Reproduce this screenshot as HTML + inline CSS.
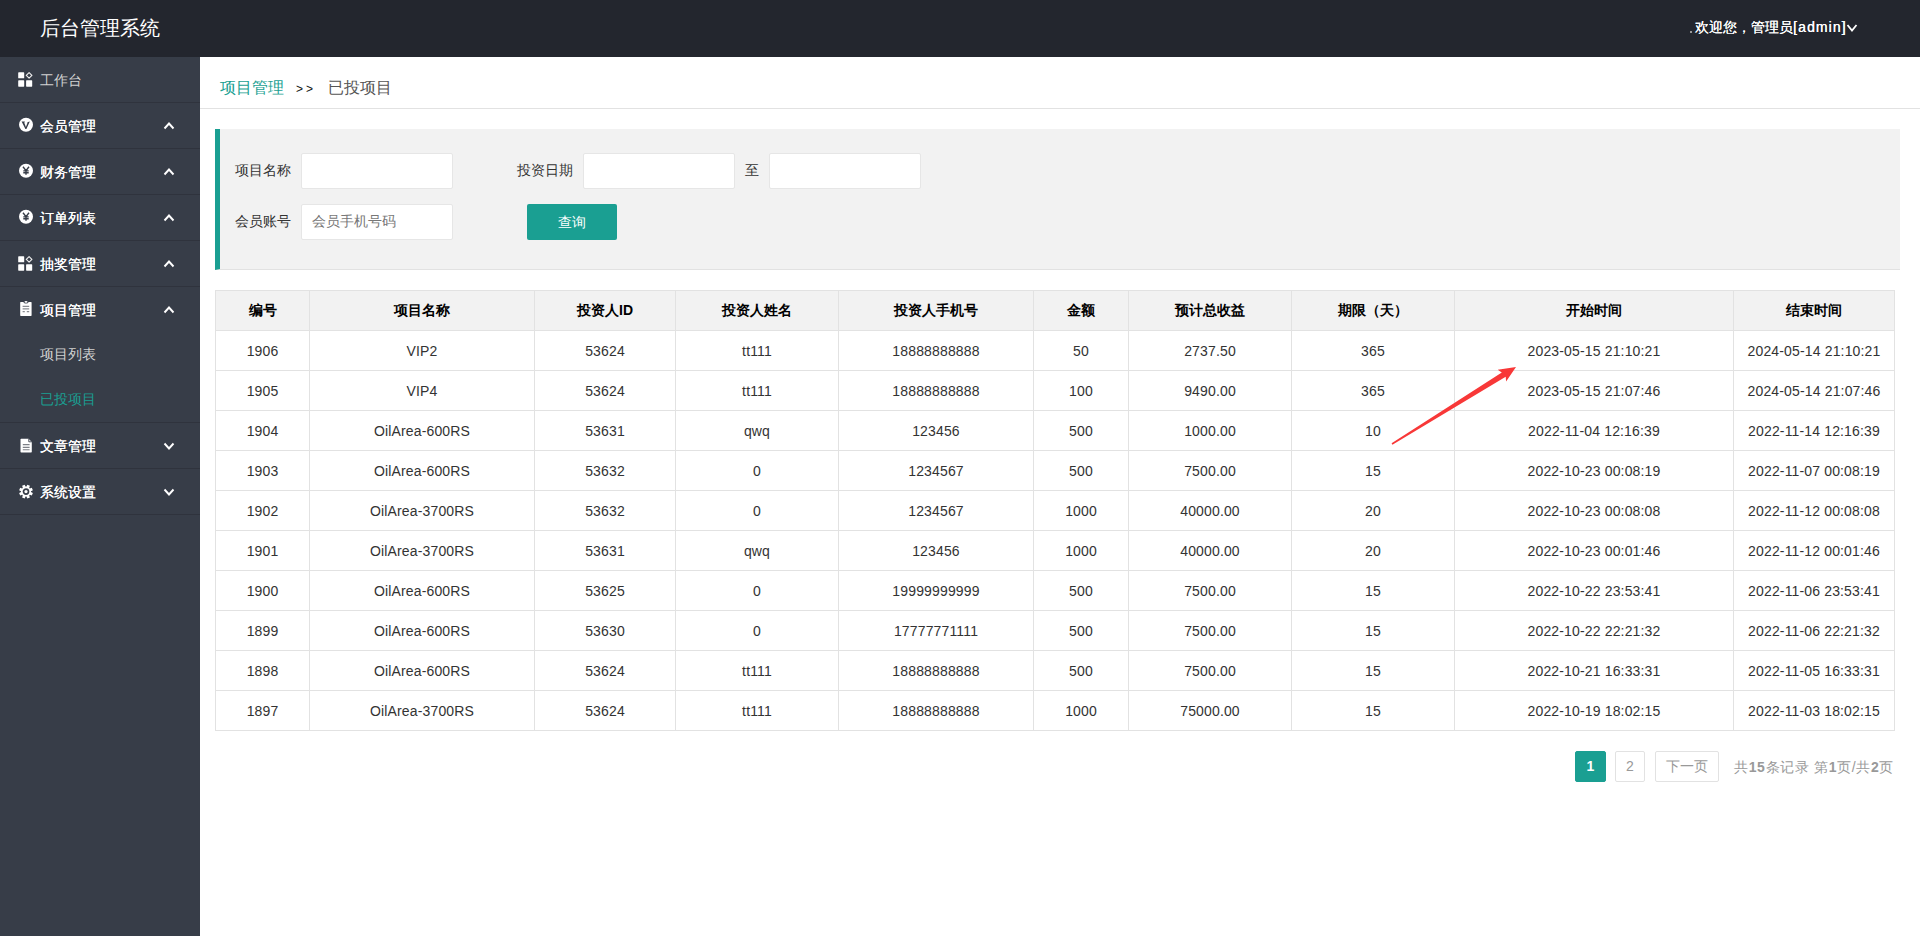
<!DOCTYPE html>
<html><head><meta charset="utf-8">
<style>
*{box-sizing:border-box;margin:0;padding:0}
html,body{width:1920px;height:936px;overflow:hidden;background:#fff;font-family:"Liberation Sans",sans-serif;font-size:14px;color:#333}
.a{position:absolute}
.hdr{position:absolute;left:0;top:0;width:1920px;height:57px;background:#23262E}
.hdr .logo{position:absolute;left:40px;top:14px;font-size:20px;color:#fff;line-height:28px;white-space:nowrap}
.hdr .user{position:absolute;left:1695px;top:17px;color:#fff;font-size:14px;line-height:20px;white-space:nowrap;text-shadow:0.3px 0 0 #fff}
.side{position:absolute;left:0;top:57px;width:200px;height:879px;background:#373D48}
.nav{position:absolute;left:0;width:200px;height:46px;border-bottom:1px solid #2f333d}
.nav .t{position:absolute;left:40px;top:13px;line-height:20px;color:#fff;text-shadow:0.45px 0 0 #fff;white-space:nowrap}
.nav .t.n{text-shadow:none;color:#d2d2d2}
.nav svg{position:absolute}
.sub{position:absolute;left:40px;line-height:20px;color:#d2d2d2;white-space:nowrap}
.crumb{position:absolute;left:200px;top:57px;width:1720px;height:52px;border-bottom:1px solid #e2e2e2}
.quote{position:absolute;left:215px;top:129px;width:1685px;height:141px;background:#f2f2f2;border-left:5px solid #1a9f92;border-bottom:1px solid #e2e2e2}
.lbl{position:absolute;line-height:20px;color:#333;white-space:nowrap}
.inp{position:absolute;width:152px;height:36px;background:#fff;border:1px solid #e6e6e6;border-radius:2px}
.btn{position:absolute;left:527px;top:204px;width:90px;height:36px;background:#1a9f92;color:#fff;border-radius:2px;text-align:center;line-height:36px}
table{position:absolute;left:215px;top:290px;border-collapse:collapse;table-layout:fixed;width:1680px}
td,th{border:1px solid #e2e2e2;height:40px;text-align:center;padding:0;font-size:14px;color:#333;white-space:nowrap}
td{letter-spacing:0.15px}
th{background:#f2f2f2;font-weight:bold;color:#000}
.pg{position:absolute;top:751px;height:31px;border:1px solid #e2e2e2;border-radius:2px;background:#fff;color:#999;text-align:center;line-height:29px}
</style></head><body>
<div class="hdr">
  <div class="logo">后台管理系统</div>
  <div class="a" style="left:1690px;top:31px;width:1.5px;height:1.5px;background:#999"></div>
  <div class="user">欢迎您，管理员<span style="letter-spacing:1.1px">[admin]</span></div>
  <svg class="a" style="left:1846px;top:23px" width="12" height="10" viewBox="0 0 12 10"><path d="M1.5 2 L6 7.5 L10.5 2" fill="none" stroke="#fff" stroke-width="1.8"/></svg>
</div>
<div class="side">
  <div class="nav" style="top:0">
    <svg style="left:18px;top:15px" width="16" height="16" viewBox="0 0 16 16"><rect x="0.2" y="0.3" width="6" height="6" rx="0.6" fill="#fff"/><path d="M11.1 0.7 L13.9 3.4 L11.1 6.1 L8.3 3.4 Z" fill="none" stroke="#eee" stroke-width="1.15" stroke-linejoin="round"/><rect x="0.2" y="8.3" width="6" height="6.4" rx="0.6" fill="#fff"/><rect x="8.1" y="8.3" width="6.1" height="6.4" rx="0.6" fill="#fff"/></svg>
    <div class="t n">工作台</div></div>
  <div class="nav" style="top:46px">
    <svg style="left:18px;top:14px" width="16" height="16" viewBox="0 0 16 16"><circle cx="8" cy="7.8" r="7" fill="#fff"/><path d="M3.6 4.6 L6.8 4.6 L6.8 5.3 L6.2 5.5 L7.9 10 L9.6 5.5 L9.2 5.2 L11.8 4.6 L8.4 12 L7.4 12 Z" fill="#373D48"/></svg>
    <div class="t">会员管理</div>
    <svg style="left:162px;top:18px" width="14" height="10" viewBox="0 0 14 10"><path d="M2.5 7.5 L7 2.5 L11.5 7.5" fill="none" stroke="#fff" stroke-width="1.9"/></svg></div>
  <div class="nav" style="top:92px">
    <svg style="left:18px;top:14px" width="16" height="16" viewBox="0 0 16 16"><circle cx="8" cy="7.8" r="7" fill="#fff"/><path d="M5 3.8 L8 7.6 L11 3.8 M8 7.4 L8 11.8 M5.3 7.9 L10.7 7.9 M5.3 9.8 L10.7 9.8" fill="none" stroke="#373D48" stroke-width="1.4"/></svg>
    <div class="t">财务管理</div>
    <svg style="left:162px;top:18px" width="14" height="10" viewBox="0 0 14 10"><path d="M2.5 7.5 L7 2.5 L11.5 7.5" fill="none" stroke="#fff" stroke-width="1.9"/></svg></div>
  <div class="nav" style="top:138px">
    <svg style="left:18px;top:14px" width="16" height="16" viewBox="0 0 16 16"><circle cx="8" cy="7.8" r="7" fill="#fff"/><path d="M5 3.8 L8 7.6 L11 3.8 M8 7.4 L8 11.8 M5.3 7.9 L10.7 7.9 M5.3 9.8 L10.7 9.8" fill="none" stroke="#373D48" stroke-width="1.4"/></svg>
    <div class="t">订单列表</div>
    <svg style="left:162px;top:18px" width="14" height="10" viewBox="0 0 14 10"><path d="M2.5 7.5 L7 2.5 L11.5 7.5" fill="none" stroke="#fff" stroke-width="1.9"/></svg></div>
  <div class="nav" style="top:184px">
    <svg style="left:18px;top:15px" width="16" height="16" viewBox="0 0 16 16"><rect x="0.2" y="0.3" width="6" height="6" rx="0.6" fill="#fff"/><path d="M11.1 0.7 L13.9 3.4 L11.1 6.1 L8.3 3.4 Z" fill="none" stroke="#eee" stroke-width="1.15" stroke-linejoin="round"/><rect x="0.2" y="8.3" width="6" height="6.4" rx="0.6" fill="#fff"/><rect x="8.1" y="8.3" width="6.1" height="6.4" rx="0.6" fill="#fff"/></svg>
    <div class="t">抽奖管理</div>
    <svg style="left:162px;top:18px" width="14" height="10" viewBox="0 0 14 10"><path d="M2.5 7.5 L7 2.5 L11.5 7.5" fill="none" stroke="#fff" stroke-width="1.9"/></svg></div>
  <div class="nav" style="top:230px;height:136px">
    <svg style="left:18px;top:14px" width="16" height="16" viewBox="0 0 16 16"><path d="M2.2 1.6 Q2.2 1 2.8 1 L5.3 1 Q6 2.6 8 2.6 Q10 2.6 10.7 1 L13 1 Q13.6 1 13.6 1.6 L13.6 14.3 Q13.6 15 13 15 L2.8 15 Q2.2 15 2.2 14.3 Z" fill="#fff"/><ellipse cx="8" cy="0.9" rx="1.6" ry="0.8" fill="#fff"/><path d="M4.6 5.3 L11.2 5.3 M4.6 7.8 L11.2 7.8 M4.6 10.6 L6.8 10.6 M8.8 10.6 L11.2 10.6" stroke="#8a8d93" stroke-width="1.2"/></svg>
    <div class="t">项目管理</div>
    <svg style="left:162px;top:18px" width="14" height="10" viewBox="0 0 14 10"><path d="M2.5 7.5 L7 2.5 L11.5 7.5" fill="none" stroke="#fff" stroke-width="1.9"/></svg>
    <div class="sub" style="top:57px">项目列表</div>
    <div class="sub" style="top:102px;color:#1a9f92">已投项目</div>
  </div>
  <div class="nav" style="top:366px">
    <svg style="left:18px;top:14px" width="16" height="16" viewBox="0 0 16 16"><path d="M2.5 2.5 Q2.5 1.8 3.2 1.8 L10.6 1.8 L13.8 5 L13.8 14.8 Q13.8 15.5 13.1 15.5 L3.2 15.5 Q2.5 15.5 2.5 14.8 Z" fill="#fff"/><path d="M10.8 1.8 L10.8 4.8 L13.8 4.8" fill="none" stroke="#373D48" stroke-width="0.9"/><path d="M4.8 7.6 L11.6 7.6 M4.8 10.4 L11.6 10.4 M4.8 12.8 L11.6 12.8" stroke="#7d8087" stroke-width="1.1"/></svg>
    <div class="t">文章管理</div>
    <svg style="left:162px;top:18px" width="14" height="10" viewBox="0 0 14 10"><path d="M2.5 2.5 L7 7.5 L11.5 2.5" fill="none" stroke="#fff" stroke-width="1.9"/></svg></div>
  <div class="nav" style="top:412px">
    <svg style="left:18px;top:14px" width="16" height="16" viewBox="0 0 16 16"><path d="M8.46 3.62 L9.34 1.73 L11.91 2.79 L11.19 4.75 L11.85 5.41 L13.81 4.69 L14.87 7.26 L12.98 8.14 L12.98 9.06 L14.87 9.94 L13.81 12.51 L11.85 11.79 L11.19 12.45 L11.91 14.41 L9.34 15.47 L8.46 13.58 L7.54 13.58 L6.66 15.47 L4.09 14.41 L4.81 12.45 L4.15 11.79 L2.19 12.51 L1.13 9.94 L3.02 9.06 L3.02 8.14 L1.13 7.26 L2.19 4.69 L4.15 5.41 L4.81 4.75 L4.09 2.79 L6.66 1.73 L7.54 3.62 Z" fill="#fff"/><circle cx="8" cy="8.6" r="2.5" fill="none" stroke="#373D48" stroke-width="1.7"/></svg>
    <div class="t">系统设置</div>
    <svg style="left:162px;top:18px" width="14" height="10" viewBox="0 0 14 10"><path d="M2.5 2.5 L7 7.5 L11.5 2.5" fill="none" stroke="#fff" stroke-width="1.9"/></svg></div>
</div>
<div class="crumb"></div>
<div class="lbl" style="left:220px;top:78px;color:#1a9f92;font-size:16px">项目管理</div>
<div class="lbl" style="left:296px;top:79px;color:#111;font-size:12px;letter-spacing:3px">&gt;&gt;</div>
<div class="lbl" style="left:328px;top:78px;color:#555;font-size:16px">已投项目</div>
<div class="quote"></div>
<div class="lbl" style="left:235px;top:160px">项目名称</div>
<div class="inp" style="left:301px;top:153px"></div>
<div class="lbl" style="left:517px;top:160px">投资日期</div>
<div class="inp" style="left:583px;top:153px"></div>
<div class="lbl" style="left:745px;top:160px">至</div>
<div class="inp" style="left:769px;top:153px"></div>
<div class="lbl" style="left:235px;top:211px">会员账号</div>
<div class="inp" style="left:301px;top:204px"></div>
<div class="lbl" style="left:312px;top:211px;color:#777">会员手机号码</div>
<div class="btn">查询</div>
<table>
<colgroup><col style="width:94px"><col style="width:225px"><col style="width:141px"><col style="width:163px"><col style="width:195px"><col style="width:95px"><col style="width:163px"><col style="width:163px"><col style="width:279px"><col style="width:161px"></colgroup>
<tr><th>编号</th><th>项目名称</th><th>投资人ID</th><th>投资人姓名</th><th>投资人手机号</th><th>金额</th><th>预计总收益</th><th>期限（天）</th><th>开始时间</th><th>结束时间</th></tr>
<tr><td>1906</td><td>VIP2</td><td>53624</td><td>tt111</td><td>18888888888</td><td>50</td><td>2737.50</td><td>365</td><td>2023-05-15 21:10:21</td><td>2024-05-14 21:10:21</td></tr>
<tr><td>1905</td><td>VIP4</td><td>53624</td><td>tt111</td><td>18888888888</td><td>100</td><td>9490.00</td><td>365</td><td>2023-05-15 21:07:46</td><td>2024-05-14 21:07:46</td></tr>
<tr><td>1904</td><td>OilArea-600RS</td><td>53631</td><td>qwq</td><td>123456</td><td>500</td><td>1000.00</td><td>10</td><td>2022-11-04 12:16:39</td><td>2022-11-14 12:16:39</td></tr>
<tr><td>1903</td><td>OilArea-600RS</td><td>53632</td><td>0</td><td>1234567</td><td>500</td><td>7500.00</td><td>15</td><td>2022-10-23 00:08:19</td><td>2022-11-07 00:08:19</td></tr>
<tr><td>1902</td><td>OilArea-3700RS</td><td>53632</td><td>0</td><td>1234567</td><td>1000</td><td>40000.00</td><td>20</td><td>2022-10-23 00:08:08</td><td>2022-11-12 00:08:08</td></tr>
<tr><td>1901</td><td>OilArea-3700RS</td><td>53631</td><td>qwq</td><td>123456</td><td>1000</td><td>40000.00</td><td>20</td><td>2022-10-23 00:01:46</td><td>2022-11-12 00:01:46</td></tr>
<tr><td>1900</td><td>OilArea-600RS</td><td>53625</td><td>0</td><td>19999999999</td><td>500</td><td>7500.00</td><td>15</td><td>2022-10-22 23:53:41</td><td>2022-11-06 23:53:41</td></tr>
<tr><td>1899</td><td>OilArea-600RS</td><td>53630</td><td>0</td><td>17777771111</td><td>500</td><td>7500.00</td><td>15</td><td>2022-10-22 22:21:32</td><td>2022-11-06 22:21:32</td></tr>
<tr><td>1898</td><td>OilArea-600RS</td><td>53624</td><td>tt111</td><td>18888888888</td><td>500</td><td>7500.00</td><td>15</td><td>2022-10-21 16:33:31</td><td>2022-11-05 16:33:31</td></tr>
<tr><td>1897</td><td>OilArea-3700RS</td><td>53624</td><td>tt111</td><td>18888888888</td><td>1000</td><td>75000.00</td><td>15</td><td>2022-10-19 18:02:15</td><td>2022-11-03 18:02:15</td></tr>
</table>
<div class="pg" style="left:1575px;width:31px;background:#1a9f92;border-color:#1a9f92;color:#fff;font-weight:bold">1</div>
<div class="pg" style="left:1615px;width:30px">2</div>
<div class="pg" style="left:1655px;width:64px">下一页</div>
<div class="lbl" style="left:1734px;top:757px;color:#999;letter-spacing:0.65px">共<b>15</b>条记录 第<b>1</b>页/共<b>2</b>页</div>
<svg class="a" style="left:0;top:0" width="1920" height="936"><polygon points="1391.6,443.3 1501.8,372.4 1497.7,369.7 1516.0,367.0 1506.1,381.4 1505.7,376.8 1392.4,444.7" fill="#f83838"/></svg>
</body></html>
